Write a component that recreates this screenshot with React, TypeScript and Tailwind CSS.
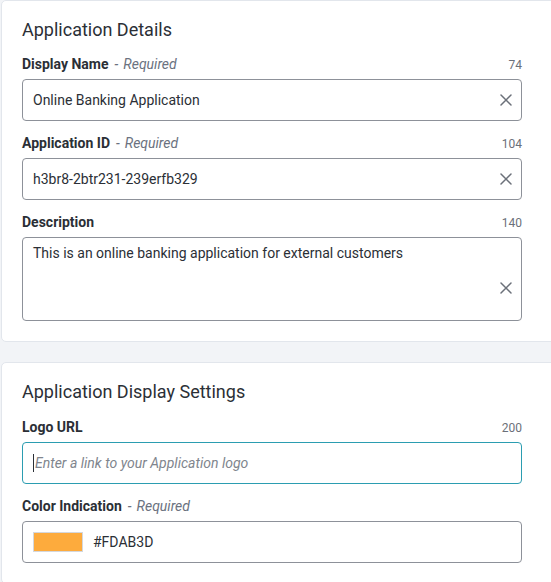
import React from "react";

function ClearIcon() {
  return (
    <svg width="12" height="12" viewBox="0 0 12 12" className="shrink-0 text-[#6b7079]">
      <path d="M1 1L11 11M11 1L1 11" stroke="currentColor" strokeWidth="1.5" strokeLinecap="round" />
    </svg>
  );
}

function Label({ text, required, count }: { text: string; required?: boolean; count?: string }) {
  return (
    <div className="flex items-baseline justify-between h-5">
      <div className="text-sm leading-5">
        <span className="font-bold text-[#2b2f36]">{text}</span>
        {required && (
          <span className="italic text-[#6b7280]">
            <span className="ml-[6px]">-</span>
            <span className="ml-[5px]">Required</span>
          </span>
        )}
      </div>
      {count && <span className="text-xs text-[#6b7079]">{count}</span>}
    </div>
  );
}

function TextField({ value }: { value: string }) {
  return (
    <div className="mt-[5px] h-[42px] w-[500px] flex items-center justify-between rounded-[4px] border border-[#8d9199] bg-white pl-[10px] pr-[9px] text-sm text-[#2b2f36]">
      <span>{value}</span>
      <ClearIcon />
    </div>
  );
}

export default function App() {
  return (
    <div
      className="w-[551px] h-[582px] overflow-hidden bg-[#f2f4f7]"
      style={{ fontFamily: "Roboto, 'Noto Sans', sans-serif" }}
    >
      {/* Application Details card */}
      <section className="ml-[1px] w-[580px] rounded-[5px] border border-[#e2e6ec] bg-white pl-5 pt-[17px] pb-5">
        <h2 className="text-lg leading-6 text-[#2b2f36]">Application Details</h2>

        <div className="mt-3">
          <div className="w-[500px]">
            <Label text="Display Name" required count="74" />
          </div>
          <TextField value="Online Banking Application" />
        </div>

        <div className="mt-3">
          <div className="w-[500px]">
            <Label text="Application ID" required count="104" />
          </div>
          <TextField value="h3br8-2btr231-239erfb329" />
        </div>

        <div className="mt-3">
          <div className="w-[500px]">
            <Label text="Description" count="140" />
          </div>
          <div className="relative mt-[5px] h-[84px] w-[500px] rounded-[4px] border border-[#8d9199] bg-white pl-[10px] pt-[5px] text-sm leading-5 text-[#2b2f36]">
            This is an online banking application for external customers
            <div className="absolute right-[9px] top-[44px] flex">
              <ClearIcon />
            </div>
          </div>
        </div>
      </section>

      {/* Application Display Settings card */}
      <section className="mt-5 ml-[1px] w-[580px] rounded-[5px] border border-[#e2e6ec] bg-white pl-5 pt-[17px] pb-5">
        <h2 className="text-lg leading-6 text-[#2b2f36]">Application Display Settings</h2>

        <div className="mt-[13px]">
          <div className="w-[500px]">
            <Label text="Logo URL" count="200" />
          </div>
          <div className="mt-[5px] h-[42px] w-[500px] flex items-center rounded-[4px] border border-[#2b9db1] bg-white pl-[10px] text-sm italic text-[#80858d]">
            <span className="mr-px h-[18px] w-px bg-[#2b2f36]" />
            <span>Enter a link to your Application logo</span>
          </div>
        </div>

        <div className="mt-3">
          <div className="w-[500px]">
            <Label text="Color Indication" required />
          </div>
          <div className="mt-[5px] h-[42px] w-[500px] flex items-center gap-[10px] rounded-[4px] border border-[#8d9199] bg-white pl-[10px] text-sm text-[#2b2f36]">
            <span className="h-5 w-[50px] border border-[#d4d7dc] bg-[#FDAB3D]" />
            <span>#FDAB3D</span>
          </div>
        </div>
      </section>
    </div>
  );
}
